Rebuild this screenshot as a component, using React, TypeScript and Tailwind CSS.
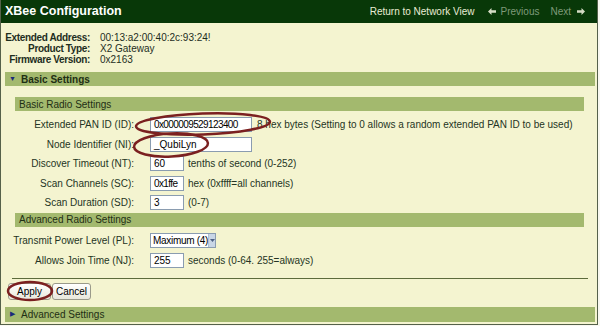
import React from "react";

const font = { fontFamily: '"Liberation Sans", Arial, sans-serif' };

function Bar({ children, className = "" }: { children: React.ReactNode; className?: string }) {
  return (
    <div className={`flex items-center bg-[#a3b96e] text-[#1e2e14] text-[10px] ${className}`}>
      {children}
    </div>
  );
}

function Row({ label, children }: { label: string; children: React.ReactNode }) {
  return (
    <div className="flex items-center h-[19.5px]">
      <div className="w-[122px] text-right whitespace-nowrap">{label}</div>
      <div className="ml-[16px] flex items-center">{children}</div>
    </div>
  );
}

function Input({ value, w, tight = false }: { value: string; w: string; tight?: boolean }) {
  return (
    <div className={`${w} h-[15px] bg-white border border-[#8a9cb0] flex items-center pl-[3px] text-[10px] text-black whitespace-nowrap overflow-hidden ${tight ? "tracking-[-0.6px]" : ""}`}>
      {value}
    </div>
  );
}

export default function App() {
  return (
    <div className="relative w-[600px] h-[326px] bg-[#f8f8f0] overflow-hidden text-[10px] text-[#243424]" style={font}>
      <div className="w-[598px] h-[325px] bg-[#f4f4d0] border-l border-r border-b border-[#55614a] flex flex-col">
        {/* header */}
        <div className="h-[23px] bg-[#083808] flex items-center pl-[4px] pr-[12px] shrink-0">
          <div className="text-white font-bold text-[12.5px]">XBee Configuration</div>
          <div className="ml-auto flex items-center text-[10px]">
            <span className="text-[#e8ecd4]">Return to Network View</span>
            <svg className="ml-[13px]" width="8" height="7" viewBox="0 0 8 7">
              <path d="M0 3.5 L3.5 0 L3.5 2.3 L8 2.3 L8 4.7 L3.5 4.7 L3.5 7 Z" fill="#d6dcc6" />
            </svg>
            <span className="ml-[5px] text-[#7f9a7a]">Previous</span>
            <span className="ml-[11px] text-[#7f9a7a]">Next</span>
            <svg className="ml-[6px]" width="8" height="7" viewBox="0 0 8 7">
              <path d="M8 3.5 L4.5 0 L4.5 2.3 L0 2.3 L0 4.7 L4.5 4.7 L4.5 7 Z" fill="#d6dcc6" />
            </svg>
          </div>
        </div>

        {/* info */}
        <div className="pt-[9px] pl-[4px] grid grid-cols-[85px_auto] gap-x-[10px] leading-[11px] text-[#1e2e1e]">
          <div className="text-right font-bold tracking-[-0.35px] whitespace-nowrap">Extended Address:</div>
          <div>00:13:a2:00:40:2c:93:24!</div>
          <div className="text-right font-bold tracking-[-0.35px] whitespace-nowrap">Product Type:</div>
          <div>X2 Gateway</div>
          <div className="text-right font-bold tracking-[-0.35px] whitespace-nowrap">Firmware Version:</div>
          <div>0x2163</div>
        </div>

        {/* Basic Settings bar */}
        <Bar className="mt-[7px] ml-[4px] w-[590px] h-[14px] font-bold text-[10.5px]">
          <span className="ml-[4px] mr-[5px] text-[#1a2a7a] text-[7px]">▼</span>
          Basic Settings
        </Bar>

        {/* inner */}
        <div className="ml-[11px] w-[576px] border-b border-[#5c6b3c] pb-[8px] flex flex-col">
          <Bar className="mt-[11px] ml-[3px] w-[569px] h-[14px]">
            <span className="ml-[4px]">Basic Radio Settings</span>
          </Bar>
          <div className="pt-[4px]">
            <Row label="Extended PAN ID (ID):">
              <Input value="0x000009529123400" w="w-[102px]" tight />
              <span className="ml-[5px] whitespace-nowrap">8 hex bytes (Setting to 0 allows a random extended PAN ID to be used)</span>
            </Row>
            <Row label="Node Identifier (NI):">
              <Input value="_QubiLyn" w="w-[102px]" />
            </Row>
            <Row label="Discover Timeout (NT):">
              <Input value="60" w="w-[34px]" />
              <span className="ml-[4px]">tenths of second (0-252)</span>
            </Row>
            <Row label="Scan Channels (SC):">
              <Input value="0x1ffe" w="w-[34px]" tight />
              <span className="ml-[4px]">hex (0xffff=all channels)</span>
            </Row>
            <Row label="Scan Duration (SD):">
              <Input value="3" w="w-[34px]" />
              <span className="ml-[4px]">(0-7)</span>
            </Row>
          </div>
          <Bar className="ml-[3px] w-[569px] h-[14px]">
            <span className="ml-[4px]">Advanced Radio Settings</span>
          </Bar>
          <div className="pt-[4.5px]">
            <Row label="Transmit Power Level (PL):">
              <div className="w-[66px] h-[15px] bg-white border border-[#8a9cb0] flex items-center text-black">
                <span className="pl-[2px] whitespace-nowrap tracking-[-0.3px]">Maximum (4)</span>
                <div className="ml-auto w-[10px] h-full bg-[#c9d6e6] border-l border-[#b0c0d4] flex items-center justify-center">
                  <svg width="5" height="3" viewBox="0 0 5 3"><path d="M0 0 L5 0 L2.5 3 Z" fill="#4d6185" /></svg>
                </div>
              </div>
            </Row>
            <Row label="Allows Join Time (NJ):">
              <Input value="255" w="w-[34px]" />
              <span className="ml-[4px]">seconds (0-64. 255=always)</span>
            </Row>
          </div>
        </div>

        {/* buttons */}
        <div className="mt-[4px] ml-[7px] flex items-center h-[17px]">
          <div className="h-[17px] w-[43px] flex items-center justify-center border border-[#9a9a8a] rounded-[3px] bg-gradient-to-b from-white to-[#e8e8dc] text-black">Apply</div>
          <div className="ml-[1px] h-[17px] w-[39px] flex items-center justify-center border border-[#9a9a8a] rounded-[3px] bg-gradient-to-b from-white to-[#e8e8dc] text-black">Cancel</div>
        </div>

        {/* Advanced Settings bar */}
        <Bar className="mt-[7px] ml-[4px] w-[590px] h-[15px] text-[10.5px]">
          <span className="ml-[5px] mr-[6px] text-[#1a2a7a] text-[7px]">▶</span>
          Advanced Settings
        </Bar>
      </div>

      <svg className="absolute left-0 top-0 pointer-events-none" width="600" height="326" viewBox="0 0 600 326">
        <g fill="none" stroke="#7b2020" strokeWidth="2.5">
          <ellipse cx="203" cy="124" rx="67" ry="10.5" transform="rotate(-2 203 124)" />
          <ellipse cx="171" cy="145" rx="37" ry="11.5" transform="rotate(-3 171 145)" />
          <ellipse cx="30" cy="291" rx="22" ry="9" />
        </g>
      </svg>
    </div>
  );
}
